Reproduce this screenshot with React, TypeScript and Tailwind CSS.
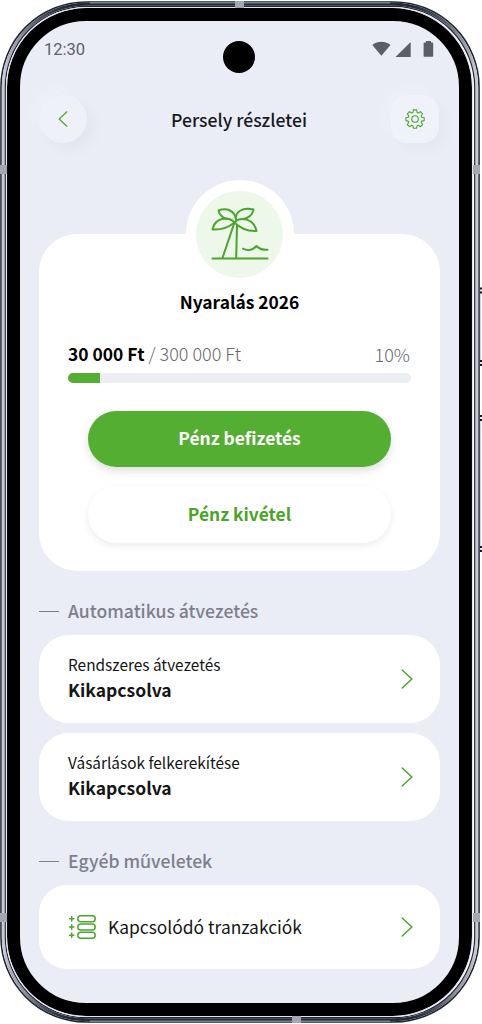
import type { ReactNode } from "react";

const GREEN = "#4ca52c";

function Chevron({ className }: { className: string }) {
  return (
    <svg viewBox="0 0 12 20" fill="none" stroke={GREEN} strokeWidth="1.5" strokeLinecap="round" className={className}>
      <path d="M1.2 1 10.8 10l-9.6 9" />
    </svg>
  );
}

function PalmIcon() {
  return (
    <svg viewBox="0 0 60 56" fill="none" stroke={GREEN} strokeWidth="2" strokeLinecap="round" strokeLinejoin="round" className="h-14 w-15">
      <path d="M2.500 53.500h55M12.500 53 23.800 19.500M27 20.500l-.8 32.500" />
      <path d="M24.500 17.500C18 11 5 12.500 2.500 24.500c8 .5 16-2 22-7Z" />
      <path d="M24.500 17.500C30 11 44 13.500 46.500 26c-8 .5-16-2.500-22-8.500Z" />
      <path d="M26 14.500C25 6 17 2 8.500 5.500c1 4.500 4 7 8 8.500" />
      <path d="M26 14.500C25 7 32 2 43.500 4.500 42.500 10 38 13.500 33 14" />
      <path d="M33 43.700c4 2.300 9.500 1.800 13.500-2.700 3 3.500 6.500 4 11 3.800" />
    </svg>
  );
}

function GearIcon() {
  return (
    <svg viewBox="0 0 20 20" fill="none" stroke={GREEN} strokeWidth="1.1" strokeLinejoin="round" className="size-5">
      <path d="M8.400.900h3.200l.5 2.500 1.300.6 2.100-1.400 2.100 2.200-1.400 2.200.5 1.200 2.500.5v2.900l-2.500.5-.5 1.300 1.400 2.100-2.100 2.200-2.200-1.400-1.200.5-.5 2.400H8.400l-.5-2.400-1.300-.5-2.100 1.400-2.200-2.200 1.400-2.100-.5-1.300-2.300-.5V8.700l2.300-.5.6-1.200-1.500-2.200 2.200-2.200L6.600 4l1.300-.6Z" />
      <circle cx="10" cy="10" r="3.300" />
    </svg>
  );
}

function ListIcon() {
  return (
    <svg viewBox="0 0 28 26" fill="none" stroke={GREEN} strokeWidth="1.500" strokeLinecap="round" className="h-[26px] w-7">
      {[4.700, 13, 21.300].map((y) => (
        <g key={y}>
          <path d={`M1.500 ${y}h4.400M3.700 ${y - 2.200}v4.400`} />
          <rect x="9.800" y={y - 3} width="17.400" height="6" rx="3" />
        </g>
      ))}
    </svg>
  );
}

function StatusIcons() {
  return (
    <svg viewBox="0 0 62 16" fill="#5b5e64" className="h-4 w-[62px]">
      <path d="M.3 4C5.500-.300 13.300-.300 18.500 4L9.400 14.800Z" />
      <path d="M38.700 1v15H23.500Z" />
      <path d="M54 0h5v1.600h1.200c.6 0 1 .4 1 1v12.200c0 .6-.4 1-1 1h-7.600c-.6 0-1-.4-1-1V2.600c0-.6.4-1 1-1H54Z" />
    </svg>
  );
}

function SectionTitle({ children }: { children: ReactNode }) {
  return (
    <h2 className="flex h-6 items-center gap-[9px] text-[17.600px] font-medium text-[#7c7f8c]">
      <span className="h-px w-5 bg-[#7c7f8c]" />
      <span>{children}</span>
    </h2>
  );
}

function SettingCard({ label, value }: { label: string; value: string }) {
  return (
    <button className="flex h-22 w-full items-center justify-between rounded-[30px] bg-white pr-[27px] pl-[29px] text-left">
      <span className="flex flex-col pb-1 text-[#151515]">
        <span className="text-[15.400px] leading-[24px]">{label}</span>
        <span className="text-[17.500px] leading-[27px] font-bold">{value}</span>
      </span>
      <Chevron className="h-5 w-3" />
    </button>
  );
}

// Metal rim, antenna bands and side keys around the display
function Frame() {
  return (
    <svg viewBox="0 0 482 1024" fill="none" className="pointer-events-none absolute inset-0 h-full w-full">
      <defs>
        <linearGradient id="rim" gradientUnits="userSpaceOnUse" x1="0" y1="0" x2="0" y2="1024">
          <stop offset="0.006" stopColor="#222b38" />
          <stop offset="0.035" stopColor="#8b8f9c" />
          <stop offset="0.07" stopColor="#c9cad7" />
          <stop offset="0.93" stopColor="#c9cad7" />
          <stop offset="0.97" stopColor="#8b8f9c" />
          <stop offset="0.994" stopColor="#222b38" />
        </linearGradient>
      </defs>
      <rect x="1" y="2" width="478" height="1020" rx="85" stroke="#20242e" strokeWidth="1.600" />
      <rect x="3.300" y="4.300" width="473.400" height="1015.400" rx="83" stroke="url(#rim)" strokeWidth="3" />
      <path d="M90 2.900h300M90 1021.100h300" stroke="#aeb8bf" strokeWidth="0.800" />
      <rect x="5.300" y="6.300" width="469.400" height="1011.400" rx="81" stroke="#242731" strokeWidth="1.200" />
      <rect x="6.500" y="7.500" width="466" height="1009" rx="80" stroke="#e5e5ef" strokeWidth="1.100" />
      <path d="M0 165h7v9H0ZM473 165h7v9h-7ZM0 913h7v9H0ZM473 913h7v9h-7ZM235 1h9v7h-9ZM292 1016h9v7h-9Z" fill="#a4a6b2" />
      <path d="M480.500 290v74M480.500 418v132" stroke="#d2d3df" />
      <path d="M480 288.500h2M480 292.500h2M480 361h2M480 365h2M480 416h2M480 420h2M480 547h2M480 551h2" stroke="#151720" strokeWidth="2" />
    </svg>
  );
}

export default function App() {
  return (
    <div className="relative h-[1024px] w-[482px] overflow-hidden bg-white p-[7px] pt-2 pb-2 font-['Noto_Sans_CJK_SC','Noto_Sans',sans-serif]">
      <main className="h-[1008px] w-[465px] overflow-hidden rounded-[79px] border-[13px] border-black bg-[#ebedf6] px-[19px]">
        <div className="flex h-[68px] items-start justify-between pt-[20px] pr-[6px] pl-[5px]">
          <span className="pt-px font-['Roboto',sans-serif] text-[16.500px] leading-4 text-[#5d6066]">12:30</span>
          <StatusIcons />
        </div>
        <div className="absolute top-[41px] left-[223px] size-8 rounded-full bg-black" />

        <header className="flex h-[60px] items-center justify-between pr-[1px]">
          <button className="flex size-12 items-center justify-center rounded-full bg-[#eff1f8] shadow-[6px_6px_14px_#e1e4ed,-6px_-6px_14px_#eff1f8]">
            <Chevron className="h-4 w-[10px] rotate-180" />
          </button>
          <h1 className="pt-0.5 text-[17.600px] font-medium text-[#171a20]">Persely részletei</h1>
          <button className="flex size-12 items-center justify-center rounded-2xl bg-[#eff2f8] shadow-[6px_6px_14px_#e4e7f0,-6px_-6px_14px_#eff1f8]">
            <GearIcon />
          </button>
        </header>

        <section className="mt-[85px] flex h-[337px] flex-col rounded-[38px] bg-white px-[29px]">
          <div className="-mt-[54px] flex size-[108px] shrink-0 items-center justify-center self-center rounded-full bg-white">
            <div className="flex size-[87px] items-center justify-center rounded-full bg-[#edf7ea] pb-[3px]">
              <PalmIcon />
            </div>
          </div>
          <h2 className="mt-px text-center text-[17.400px] leading-[26px] font-bold text-black">Nyaralás 2026</h2>
          <div className="mt-[25px] flex items-center justify-between text-[18px] leading-[26px] font-light text-[#68686b]">
            <p>
              <b className="text-[17.400px] font-bold text-black">30 000 Ft</b>
              <span> / 300 000 Ft</span>
            </p>
            <span className="pr-px">10%</span>
          </div>
          <div className="mt-[6px] h-[10px] shrink-0 overflow-hidden rounded-full bg-[#ebeef2]">
            <div className="h-full w-8 bg-[#54ae31]" />
          </div>
          <div className="mt-7 flex flex-col gap-[19px] px-[20px] text-[17.400px] font-bold">
            <button className="h-14 rounded-full bg-[#54ae31] pb-0.5 text-white shadow-[0_4px_8px_#00000020]">Pénz befizetés</button>
            <button className="h-[57px] rounded-full bg-white text-[#48a526] shadow-[0_3px_7px_#00000014]">Pénz kivétel</button>
          </div>
        </section>

        <div className="mt-7">
          <SectionTitle>Automatikus átvezetés</SectionTitle>
          <div className="mt-3 flex flex-col gap-[10px]">
            <SettingCard label="Rendszeres átvezetés" value="Kikapcsolva" />
            <SettingCard label="Vásárlások felkerekítése" value="Kikapcsolva" />
          </div>
        </div>

        <div className="mt-7">
          <SectionTitle>Egyéb műveletek</SectionTitle>
          <button className="mt-3 flex h-[84px] w-full items-center rounded-[28px] bg-white pr-[27px] pl-[29px]">
            <ListIcon />
            <span className="ml-3 text-[17.400px] text-[#151515]">Kapcsolódó tranzakciók</span>
            <Chevron className="ml-auto h-5 w-3" />
          </button>
        </div>
      </main>
      <Frame />
    </div>
  );
}
